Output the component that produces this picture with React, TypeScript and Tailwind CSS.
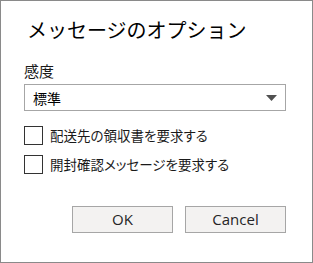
import React from "react";

const jp = "font-['Noto_Sans_CJK_JP','Noto_Sans',sans-serif]";

const Checkbox = ({ label }: { label: string }) => (
  <label className="flex items-center h-[19px]">
    <span className="w-[19px] h-[19px] border border-[#333333] bg-white shrink-0" />
    <span
      className={`ml-[7px] text-[13.5px] leading-[19px] text-[#1a1a1a] [font-feature-settings:'palt'] ${jp}`}
    >
      {label}
    </span>
  </label>
);

const App = () => {
  return (
    <div className="w-[313px] h-[263px] border border-[#8a8a8a] bg-white flex flex-col pl-[23px] pr-[26px]">
      <h1 className={`mt-[15px] ml-[3px] text-[20px] leading-[28px] text-black ${jp}`}>
        メッセージのオプション
      </h1>
      <div className={`mt-[17px] text-[15px] leading-[20px] text-[#1a1a1a] ${jp}`}>感度</div>
      <div className="mt-[3px] h-[27px] w-[262px] border border-[#a6a6a6] flex items-center justify-between pl-[8px] pr-[8px]">
        <span className={`text-[14px] leading-[20px] text-black ${jp}`}>標準</span>
        <svg width="11" height="6" viewBox="0 0 11 6">
          <path d="M0 0 H11 L5.5 6 Z" fill="#505050" />
        </svg>
      </div>
      <div className="mt-[15px] flex flex-col gap-[10px]">
        <Checkbox label="配送先の領収書を要求する" />
        <Checkbox label="開封確認メッセージを要求する" />
      </div>
      <div className="mt-[32px] flex justify-end gap-[12px]">
        <button className="w-[101px] h-[27px] border border-[#a6a6a6] bg-[#f3f2f1] text-[15px] text-[#252525] font-['Open_Sans',sans-serif]">
          OK
        </button>
        <button className="w-[101px] h-[27px] border border-[#a6a6a6] bg-[#f3f2f1] text-[15px] text-[#252525] font-['Open_Sans',sans-serif]">
          Cancel
        </button>
      </div>
    </div>
  );
};

export default App;
